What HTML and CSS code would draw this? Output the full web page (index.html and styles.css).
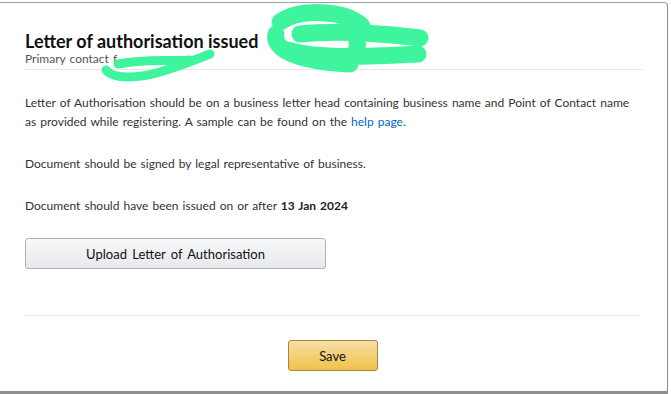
FILE: index.html
```html
<!DOCTYPE html>
<html lang="en">

<head>
  <meta charset="UTF-8" />
  <title>Letter of authorisation</title>
  <link rel="stylesheet" href="styles.css">
</head>

<body>
  <div class="modal">
    <div class="modal-header">
      <div class="title">Letter of authorisation issued</div>
      <div class="subtitle">Primary contact f</div>
    </div>
    <div class="modal-body">
      <p>Letter of Authorisation should be on a business letter head containing business name and Point of Contact name
        as provided while registering. A sample can be found on the <a href="#" class="link">help page</a>.</p>
      <p>Document should be signed by legal representative of business.</p>
      <p>Document should have been issued on or after <b>13 Jan 2024</b></p>
      <button class="upload-btn">Upload Letter of Authorisation</button>
    </div>
    <div class="modal-footer">
      <button class="save-btn">Save</button>
    </div>
    <!-- redaction marks -->
    <svg class="scribble" width="671" height="100" viewBox="0 0 671 100">
      <g fill="none" stroke="#3ef59e" stroke-linecap="round" stroke-linejoin="round">
        <path d="M280 22 C300 8 345 10 362 26 M300 34 C340 30 390 34 420 38 M288 50 C320 60 380 56 418 54 M276 34 C272 50 300 62 350 64 M350 28 C360 40 360 50 350 58" stroke-width="17" />
        <path d="M106 70 C114 80 140 78 160 72 C180 66 195 60 210 54 M118 64 C150 58 175 62 190 60" stroke-width="9" />
      </g>
    </svg>
  </div>
</body>

</html>
```

FILE: styles.css
```css
body {
  margin: 0;
  background-color: #ffffff;
  font-family: Lato, sans-serif;
  color: #333333;
}

.modal {
  position: relative;
  margin-top: 2px;
  width: 667px;
  height: 388px;
  background-color: #ffffff;
  border-top: 1px solid #a0a0a0;
  border-right: 1px solid #8a8a8a;
  border-bottom: 3px solid #8e8e8e;
  border-top-right-radius: 4px;
  display: flex;
  flex-direction: column;
}

.modal-header {
  margin: 0 24px 0 25px;
  padding-top: 27px;
  padding-bottom: 3px;
  border-bottom: 1px solid #e7e7e7;
}

.title {
  font-size: 18px;
  font-weight: bold;
  color: #111111;
  line-height: 22px;
}

.subtitle {
  font-size: 12px;
  word-spacing: 1px;
  color: #555555;
  line-height: 14px;
}

.modal-body {
  padding: 23px 25px 0 25px;
  flex: 1;
  font-size: 12px;
  word-spacing: 1px;
  line-height: 19px;
}

.modal-body p {
  margin: 0 0 23px 0;
  max-width: 622px;
}

.link {
  color: #0066c0;
  text-decoration: none;
}

.modal-body b {
  color: #222222;
}

.upload-btn {
  display: block;
  width: 301px;
  height: 31px;
  font-family: inherit;
  font-size: 13px;
  word-spacing: 2px;
  color: #111111;
  background: linear-gradient(#f7f8fa, #e7e9ec);
  border: 1px solid #adb1b8;
  border-radius: 3px;
}

.modal-footer {
  margin: 0 27px 0 25px;
  border-top: 1px solid #e7e7e7;
  padding: 24px 0 20px 0;
  display: flex;
  justify-content: center;
}

.save-btn {
  width: 90px;
  height: 31px;
  font-family: inherit;
  font-size: 13px;
  color: #111111;
  background: linear-gradient(#f7dfa5, #f0c14b);
  border: 1px solid #a88734;
  border-radius: 3px;
}

.scribble {
  position: absolute;
  top: -3px;
  left: 0;
}
```
